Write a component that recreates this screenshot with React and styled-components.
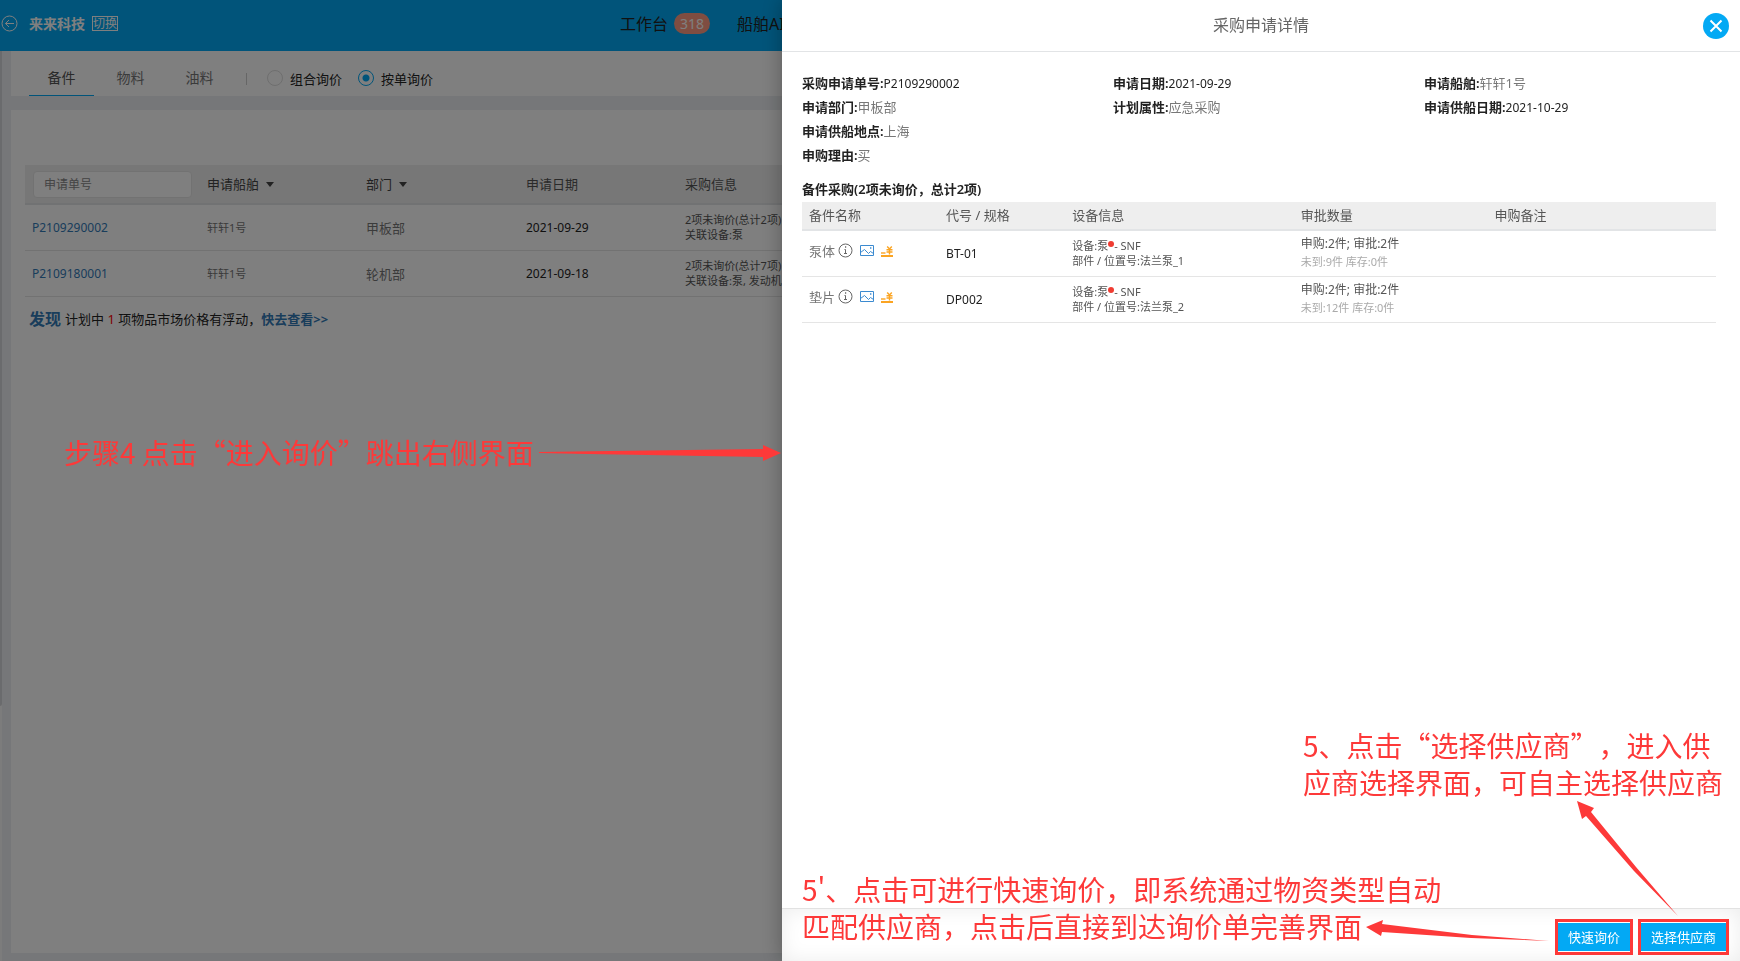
import React, { useState } from 'react'
import styled, { createGlobalStyle } from 'styled-components'

const GlobalStyle = createGlobalStyle`
  * {
    box-sizing: border-box;
  }
  body {
    margin: 0;
    background: #eceff2;
    color: #222;
    font-family: "Noto Sans", "Noto Sans CJK SC", sans-serif;
    font-size: 13px;
    overflow: hidden;
  }
  button, input {
    font-family: inherit;
  }
  a {
    color: #337ab7;
    text-decoration: none;
  }
`

/* ---------- page behind the drawer ---------- */

const Page = styled.div`
  display: flex;
  flex-direction: column;
  height: 100vh;
`

const Header = styled.header`
  display: flex;
  align-items: center;
  height: 51px;
  padding-bottom: 4px;
  background: #03a9f4;
  flex-shrink: 0;
`

const Brand = styled.div`
  display: flex;
  align-items: center;
  flex: 0 0 620px;
  color: #fff;
`

const BackButton = styled.button`
  display: flex;
  padding: 0;
  margin: 0 11px 0 1px;
  border: 0;
  background: none;
  color: #fff;
`

const Company = styled.strong`
  font-size: 14px;
  line-height: 20px;
`

const SwitchLink = styled.button`
  margin-left: 7px;
  padding: 0;
  height: 15px;
  border: 1px solid #fff;
  background: none;
  color: #fff;
  font-size: 12px;
  line-height: 13px;
`

const Nav = styled.nav`
  display: flex;
  align-items: center;
  gap: 27px;
  white-space: nowrap;
`

const NavLink = styled.a`
  display: flex;
  align-items: center;
  gap: 6px;
  color: #222;
  font-size: 16px;
  line-height: 22px;
`

const Badge = styled.span`
  padding: 0 6px;
  border-radius: 11px;
  background: #ff9b82;
  color: #fff;
  font-size: 14px;
  line-height: 21px;
`

const Body = styled.div`
  display: flex;
  flex: 1;
  min-height: 0;
`

const SideTrack = styled.div`
  width: 2px;
  background: #f8f8f8;
`

const SideThumb = styled.div`
  height: 72%;
  background: #d5d7da;
  border-radius: 0 0 2px 0;
`

const Main = styled.main`
  display: flex;
  flex-direction: column;
  flex: 1;
  gap: 14px;
  padding: 0 8px 8px 9px;
`

const TabBar = styled.div`
  display: flex;
  align-items: stretch;
  height: 45px;
  padding-left: 18px;
  background: #fff;
`

const Tab = styled.button`
  width: 65px;
  margin-right: 4px;
  padding: 12px 0 5px;
  border: 0;
  border-bottom: 1px solid ${(p) => (p.$active ? '#03a9f4' : 'transparent')};
  background: none;
  color: ${(p) => (p.$active ? '#555' : '#777')};
  font-size: 14px;
`

const Divider = styled.span`
  align-self: center;
  width: 1px;
  height: 12px;
  margin: 10px 20px 0 10px;
  background: #ccc;
`

const RadioLabel = styled.label`
  display: flex;
  align-items: center;
  gap: 7px;
  margin-right: 16px;
  padding-top: 9px;
  color: #222;
`

const Radio = styled.input`
  appearance: none;
  width: 16px;
  height: 16px;
  margin: 0;
  border: 1px solid #ddd;
  border-radius: 50%;

  &:checked {
    border-color: #03a9f4;
    background: radial-gradient(circle, #03a9f4 3px, transparent 4px);
  }
`

const Panel = styled.section`
  flex: 1;
  padding: 55px 14px 0;
  background: #fff;
`

const ListTable = styled.table`
  width: 100%;
  table-layout: fixed;
  border-collapse: collapse;

  th {
    height: 39px;
    padding: 0 7px 1px;
    background: #eee;
    border-bottom: 2px solid #e2e4e6;
    color: #555;
    font-weight: normal;
    text-align: left;
  }
  th:first-child {
    padding: 0 8px;
  }
  td {
    height: 46px;
    padding: 0 7px;
    border-bottom: 1px solid #e5e5e5;
  }
`

const Search = styled.input`
  display: block;
  width: 159px;
  height: 27px;
  padding: 0 10px;
  border: 1px solid #e5e5e5;
  border-radius: 4px;
  background: #fff;
  font-size: 12px;

  &::placeholder {
    color: #888;
  }
`

const FilterButton = styled.button`
  display: flex;
  align-items: center;
  gap: 7px;
  padding: 0;
  border: 0;
  background: none;
  color: #444;
  font-size: 13px;

  &::after {
    content: "";
    margin-top: 2px;
    border: 4px solid transparent;
    border-top: 5px solid #444;
    border-bottom: 0;
  }
`

const Value = styled.span`
  color: ${(p) => (p.$soft ? '#777' : '#222')};
  font-size: ${(p) => p.$size || 12}px;
`

const OrderLink = styled.a`
  font-size: 12px;
`

const SmallLines = styled.div`
  color: #555;
  font-size: 11px;
  line-height: 15px;
  white-space: nowrap;
`

const Discover = styled.p`
  display: flex;
  align-items: center;
  gap: 4px;
  margin: 10px 0 0 4px;
  line-height: 24px;

  strong {
    color: #337ab7;
    font-size: 16px;
  }
  em {
    color: #f00;
    font-style: normal;
  }
  a {
    margin-left: -4px;
    font-weight: bold;
  }
`

const Backdrop = styled.div`
  position: fixed;
  inset: 0;
  background: rgba(0, 0, 0, 0.5);
`

/* ---------- drawer ---------- */

const Drawer = styled.aside`
  position: fixed;
  top: 0;
  right: 0;
  bottom: 0;
  display: flex;
  flex-direction: column;
  width: calc(55% + 1px);
  background: #fff;
  box-shadow: 0 0 20px rgba(0, 0, 0, 0.3);
`

const DrawerHeader = styled.div`
  display: grid;
  grid-template-columns: 1fr auto 1fr;
  align-items: center;
  height: 52px;
  padding: 0 11px;
  border-bottom: 1px solid #e2e4e6;
`

const DrawerTitle = styled.h1`
  grid-column: 2;
  margin: 0;
  padding-bottom: 4px;
  color: #666;
  font-size: 16px;
  font-weight: normal;
`

const CloseButton = styled.button`
  display: flex;
  align-items: center;
  justify-content: center;
  justify-self: end;
  width: 26px;
  height: 26px;
  padding: 0;
  border: 0;
  border-radius: 50%;
  background: #03a9f4;
  color: #fff;
`

const DrawerBody = styled.div`
  flex: 1;
  padding: 19px 24px 0 20px;
`

const InfoGrid = styled.dl`
  display: grid;
  grid-template-columns: repeat(3, 1fr);
  grid-auto-rows: 24px;
  margin: 0 -19px 0 0;
  line-height: 24px;
`

const InfoItem = styled.div`
  display: flex;
  grid-column: ${(p) => (p.$first ? 1 : 'auto')};

  dt {
    font-weight: 600;
  }
  dd {
    margin: 0;
  }
`

const SectionTitle = styled.h2`
  margin: 10px 0 0;
  font-size: 13px;
  font-weight: 600;
  line-height: 25px;
`

const PartsTable = styled.table`
  width: 100%;
  table-layout: fixed;
  border-collapse: collapse;

  th {
    height: 28px;
    padding: 0 7px 2px;
    background: #eee;
    border-bottom: 2px solid #e2e4e6;
    color: #555;
    font-weight: normal;
    text-align: left;
  }
  td {
    height: 46px;
    padding: 0 7px;
    border-bottom: 1px solid #e5e5e5;
  }
`

const PartName = styled.div`
  display: flex;
  align-items: center;
  gap: 3px;
  padding-bottom: 6px;
  color: #777;

  svg + svg {
    margin-left: 4px;
  }
`

const Dot = styled.i`
  display: inline-block;
  width: 6px;
  height: 6px;
  border-radius: 50%;
  background: #f03c32;
  vertical-align: 3px;
`

const Quantity = styled.div`
  color: #555;
  font-size: 12px;
  line-height: 18px;

  small {
    display: block;
    color: #aaa;
    font-size: 11px;
  }
`

const DrawerFooter = styled.div`
  display: flex;
  justify-content: flex-end;
  align-items: flex-start;
  gap: 5px;
  height: 53px;
  padding: 10px 11px 0;
  border-top: 1px solid #e2e2e2;
  background: #fff;
  box-shadow: inset 0 0 20px rgba(0, 0, 0, 0.08);
`

const Marked = styled.div`
  border: 3px solid #fd3939;
`

const PrimaryButton = styled.button`
  display: block;
  height: 30px;
  padding: 0 10px;
  border: solid #fff;
  border-width: 1px 0;
  background: #03a9f4;
  color: #fff;
  font-size: 13px;
  line-height: 26px;
`

/* ---------- step notes drawn over the screen ---------- */

const Note = styled.div`
  position: absolute;
  color: #fd3939;
  font-family: "Noto Sans CJK SC", sans-serif;
  font-size: 28px;
  line-height: 37px;
  white-space: nowrap;
  text-spacing-trim: space-all;
  pointer-events: none;

  svg {
    display: block;
    fill: #fd3939;
  }
`

const StepFour = styled(Note)`
  display: flex;
  align-items: center;
  gap: 5px;
  top: 434px;
  left: 64px;
`

const ChooseNote = styled(Note)`
  right: 17px;
  bottom: 45px;

  svg {
    margin-left: 274px;
  }
`

const QuickNote = styled(Note)`
  left: 20px;
  bottom: 16px;
`

const NoteLine = styled.div`
  display: flex;
  align-items: center;
  gap: 4px;
`

const BackIcon = () => (
  <svg width="17" height="17" viewBox="0 0 17 17" fill="none" stroke="currentColor">
    <circle cx="8.5" cy="8.5" r="7.5" />
    <path d="M13 8.5H4.5M8 5 4.5 8.5 8 12" />
  </svg>
)

const CloseIcon = () => (
  <svg width="14" height="14" viewBox="0 0 14 14" stroke="currentColor" strokeWidth="2">
    <path d="M1.5 1.5l11 11M12.5 1.5l-11 11" />
  </svg>
)

const InfoIcon = () => (
  <svg width="15" height="15" viewBox="0 0 15 15" fill="none" stroke="#666">
    <circle cx="7.5" cy="7.5" r="6.5" />
    <path d="M6.5 6.5h1v4M6 10.5h3" />
    <path d="M7 4h1.2" strokeWidth="1.4" />
  </svg>
)

const ImageIcon = () => (
  <svg width="14" height="13" viewBox="0 0 14 13" fill="none" stroke="#3b8ad0">
    <path d="M.5 1.5h13v10H.5z" />
    <path d="M.5 8.5 4.5 5.5l4 4 2-2 3 2" />
    <path d="M10 4h1.4" strokeWidth="1.4" />
  </svg>
)

const PriceIcon = () => (
  <svg width="12" height="13" viewBox="0 0 12 13" fill="none" stroke="#fba422">
    <path d="M0 12h12" strokeWidth="2" />
    <path d="M0 9h4.5" strokeWidth="1.4" />
    <path d="M6.2 2.5 8.5 5l2.3-2.5M5.5 5.7h6M5.5 8h6M8.5 5v5.5" strokeWidth="1.4" />
  </svg>
)

const orders = [
  { no: 'P2109290002', dept: '甲板部', date: '2021-09-29', info: '2项未询价(总计2项)', device: '关联设备:泵' },
  { no: 'P2109180001', dept: '轮机部', date: '2021-09-18', info: '2项未询价(总计7项)', device: '关联设备:泵, 发动机' },
]

const details = [
  { label: '采购申请单号', value: 'P2109290002' },
  { label: '申请日期', value: '2021-09-29' },
  { label: '申请船舶', value: '轩轩1号', soft: true },
  { label: '申请部门', value: '甲板部', soft: true },
  { label: '计划属性', value: '应急采购', soft: true },
  { label: '申请供船日期', value: '2021-10-29' },
  { label: '申请供船地点', value: '上海', soft: true, first: true },
  { label: '申购理由', value: '买', soft: true, first: true },
]

const parts = [
  { name: '泵体', code: 'BT-01', place: '法兰泵_1', pending: 9 },
  { name: '垫片', code: 'DP002', place: '法兰泵_2', pending: 12 },
]

const tabs = ['备件', '物料', '油料']

const App = () => {
  const [tab, setTab] = useState('备件')
  const [mode, setMode] = useState('single')

  return (
    <div lang="zh-CN">
      <GlobalStyle />
      <Page>
        <Header>
          <Brand>
            <BackButton aria-label="返回"><BackIcon /></BackButton>
            <Company>来来科技</Company>
            <SwitchLink>切换</SwitchLink>
          </Brand>
          <Nav>
            <NavLink href="#workbench">工作台<Badge>318</Badge></NavLink>
            <NavLink href="#ship">船舶AI</NavLink>
          </Nav>
        </Header>
        <Body>
          <SideTrack><SideThumb /></SideTrack>
          <Main>
            <TabBar>
              {tabs.map((t) => (
                <Tab key={t} $active={t === tab} onClick={() => setTab(t)}>{t}</Tab>
              ))}
              <Divider />
              <RadioLabel>
                <Radio type="radio" name="mode" checked={mode === 'group'} onChange={() => setMode('group')} />
                组合询价
              </RadioLabel>
              <RadioLabel>
                <Radio type="radio" name="mode" checked={mode === 'single'} onChange={() => setMode('single')} />
                按单询价
              </RadioLabel>
            </TabBar>
            <Panel>
              <ListTable>
                <colgroup>
                  <col width="175" />
                  <col width="159" />
                  <col width="160" />
                  <col width="159" />
                  <col />
                </colgroup>
                <thead>
                  <tr>
                    <th><Search placeholder="申请单号" aria-label="申请单号" /></th>
                    <th><FilterButton>申请船舶</FilterButton></th>
                    <th><FilterButton>部门</FilterButton></th>
                    <th>申请日期</th>
                    <th>采购信息</th>
                  </tr>
                </thead>
                <tbody>
                  {orders.map((o) => (
                    <tr key={o.no}>
                      <td><OrderLink href={'#' + o.no}>{o.no}</OrderLink></td>
                      <td><Value $soft $size={11}>轩轩1号</Value></td>
                      <td><Value $soft $size={13}>{o.dept}</Value></td>
                      <td><Value>{o.date}</Value></td>
                      <td><SmallLines>{o.info}<br />{o.device}</SmallLines></td>
                    </tr>
                  ))}
                </tbody>
              </ListTable>
              <Discover>
                <strong>发现</strong>
                <span>计划中 <em>1</em> 项物品市场价格有浮动，</span>
                <a href="#market">快去查看&gt;&gt;</a>
              </Discover>
            </Panel>
          </Main>
        </Body>
      </Page>
      <Backdrop />

      <Drawer>
        <DrawerHeader>
          <DrawerTitle>采购申请详情</DrawerTitle>
          <CloseButton aria-label="关闭"><CloseIcon /></CloseButton>
        </DrawerHeader>
        <DrawerBody>
          <InfoGrid>
            {details.map((d) => (
              <InfoItem key={d.label} $first={d.first}>
                <dt>{d.label}:</dt>
                <dd><Value $soft={d.soft} $size={d.soft ? 13 : 12}>{d.value}</Value></dd>
              </InfoItem>
            ))}
          </InfoGrid>
          <SectionTitle>备件采购(2项未询价，总计2项)</SectionTitle>
          <PartsTable>
            <colgroup>
              <col width="15%" />
              <col width="13.8%" />
              <col width="25%" />
              <col width="21.2%" />
              <col width="25%" />
            </colgroup>
            <thead>
              <tr>
                <th>备件名称</th>
                <th>代号 / 规格</th>
                <th>设备信息</th>
                <th>审批数量</th>
                <th>申购备注</th>
              </tr>
            </thead>
            <tbody>
              {parts.map((p) => (
                <tr key={p.code}>
                  <td><PartName>{p.name}<InfoIcon /><ImageIcon /><PriceIcon /></PartName></td>
                  <td><Value>{p.code}</Value></td>
                  <td>
                    <SmallLines>
                      设备:泵<Dot />- SNF<br />
                      部件 / 位置号:{p.place}
                    </SmallLines>
                  </td>
                  <td>
                    <Quantity>
                      申购:2件; 审批:2件
                      <small>未到:{p.pending}件 库存:0件</small>
                    </Quantity>
                  </td>
                  <td />
                </tr>
              ))}
            </tbody>
          </PartsTable>
        </DrawerBody>
        <DrawerFooter>
          <Marked><PrimaryButton>快速询价</PrimaryButton></Marked>
          <Marked><PrimaryButton>选择供应商</PrimaryButton></Marked>
        </DrawerFooter>

        <ChooseNote>
          5、点击“选择供应商”，进入供<br />
          应商选择界面，可自主选择供应商
          <svg width="102" height="115" viewBox="0 0 102 115">
            <path d="M0 0l17 7-3 4 45 55 42 49-44-45L9 15l-4 3z" />
          </svg>
        </ChooseNote>
        <QuickNote>
          <NoteLine>5'、点击可进行快速询价，即系统通过物资类型自动</NoteLine>
          <NoteLine>
            匹配供应商，点击后直接到达询价单完善界面
            <svg width="183" height="28" viewBox="0 0 183 28">
              <path d="M0 14 17 7l-1 4 90 11 77 6-78-3L16 19l-1 4z" />
            </svg>
          </NoteLine>
        </QuickNote>
      </Drawer>

      <StepFour>
        步骤4 点击“进入询价”跳出右侧界面
        <svg width="242" height="18" viewBox="0 0 242 18">
          <path d="M0 8l224-3V1l18 8-18 8v-4L0 9z" />
        </svg>
      </StepFour>
    </div>
  )
}

export default App
